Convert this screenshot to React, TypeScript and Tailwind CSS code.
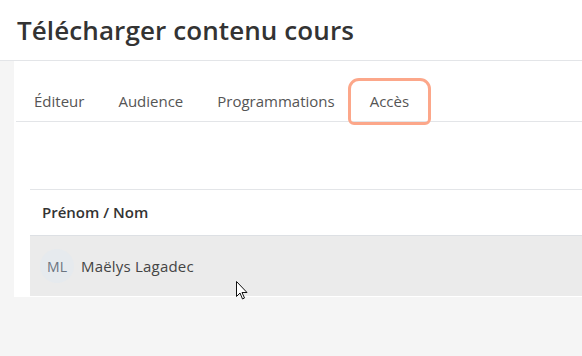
import React from 'react';

const tabs = ['Éditeur', 'Audience', 'Programmations', 'Accès'];

export default function App() {
  return (
    <div className="relative w-[582px] h-[356px] overflow-hidden bg-[#f5f5f5] font-['Open_Sans',sans-serif]">
      {/* Page header */}
      <header className="h-[61px] bg-white border-b border-[#e3e5e8] flex items-center px-[17px]">
        <h1 className="text-[26px] font-semibold text-[#333] leading-none tracking-[0.1px]">
          Télécharger contenu cours
        </h1>
      </header>

      {/* Content panel */}
      <div className="pl-[14px]">
        <div className="h-[236px] bg-white pt-[21px]">
          {/* Tabs */}
          <nav className="ml-[2px] pl-[1px] flex border-b border-[#e3e5e8]">
            {tabs.map((t) => (
              <div
                key={t}
                className={
                  t === 'Accès'
                    ? 'h-[39px] px-[18px] flex items-center text-[15px] text-[#555] rounded-t-[7px] rounded-b-[2px] outline-[3px] outline-solid outline-[#fca78a] outline-offset-[1px]'
                    : 'h-[39px] px-[17px] flex items-center text-[15px] text-[#555]'
                }
              >
                {t}
              </div>
            ))}
          </nav>

          {/* Table */}
          <div className="ml-[16px] mt-[67px] border-t border-[#e3e5e8]">
            <div className="h-[46px] px-[12px] flex items-center border-b border-[#dde0e4] text-[15px] font-semibold text-[#333]">
              Prénom / Nom
            </div>
            <div className="h-[60px] bg-[#ebebeb] flex items-center pl-[10px] gap-[7px]">
              <div className="w-[34px] h-[34px] rounded-full bg-[#e6eaee] flex items-center justify-center text-[14px] text-[#6b7480]">
                ML
              </div>
              <span className="text-[15px] text-[#444] tracking-[0.2px]">Maëlys Lagadec</span>
            </div>
          </div>
        </div>
      </div>

      {/* Mouse cursor */}
      <svg className="absolute left-[236px] top-[281px]" width="12" height="19" viewBox="0 0 12 19">
        <path d="M0.5 0.5 L0.5 15.5 L4 12 L6.5 18 L8.5 17 L6 11.5 L11 11.5 Z" fill="#fff" stroke="#111" strokeWidth="1" strokeLinejoin="round" />
      </svg>
    </div>
  );
}
